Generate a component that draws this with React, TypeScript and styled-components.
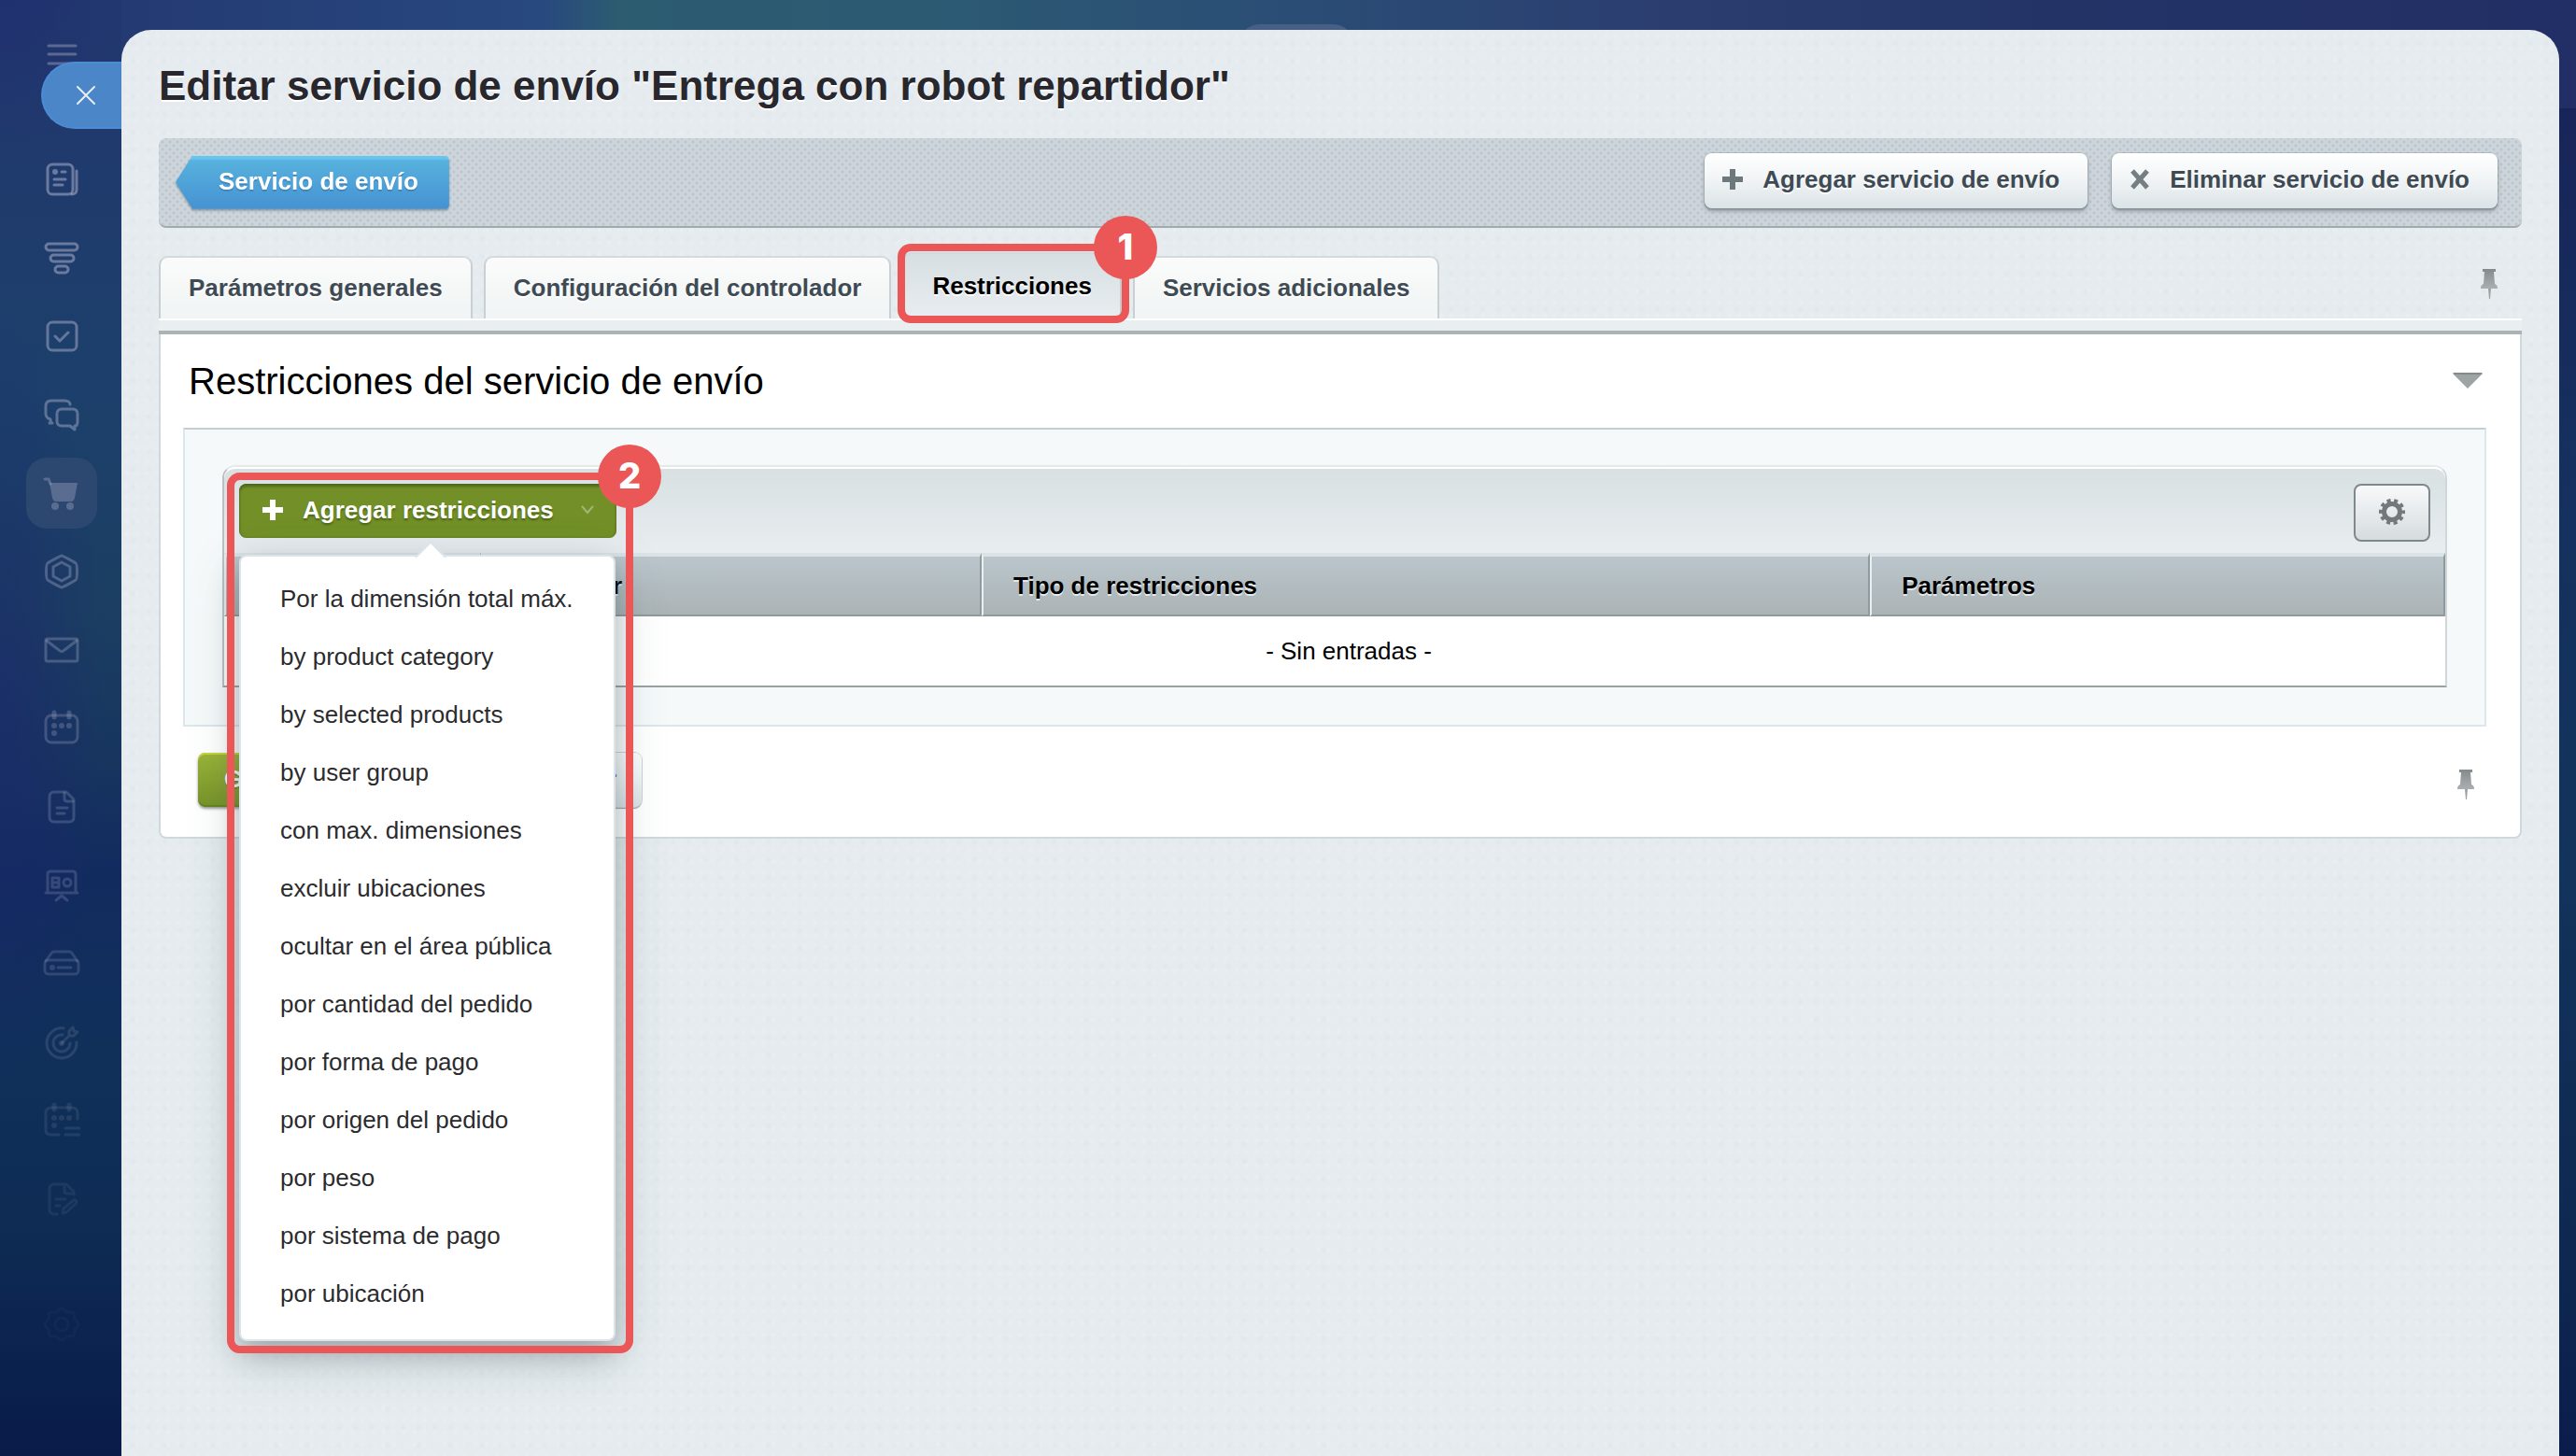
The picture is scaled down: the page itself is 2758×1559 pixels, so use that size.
import React from "react";
import styled, { createGlobalStyle, css } from "styled-components";

const red = "#eb5757";

const GlobalStyle = createGlobalStyle`
  *, *::before, *::after { box-sizing: border-box; }
  body {
    margin: 0;
    font-family: "Liberation Sans", Arial, Helvetica, sans-serif;
    font-size: 26px;
    line-height: 32px;
    color: #000;
    background: #0c2450;
  }
  button { font: inherit; color: inherit; cursor: pointer; margin: 0; }
  ul { list-style: none; margin: 0; padding: 0; }
  h1, h2 { margin: 0; }
`;

const Page = styled.div`
  position: relative;
  display: flex;
  min-height: 100vh;
  background:
    linear-gradient(90deg, #243a72 5%, #284880 21%, #2c5c70 24%, #2c5a73 36%, #2a4c75 51%, #2b3d6f 65%, #233366 80%, #222f66 100%) 0 0 / 100% 116px no-repeat,
    linear-gradient(180deg, #182459 7%, #15305f 32%, #12335b 60%, #0d2650 90%, #0a1c4c 100%);
`;

const TopPill = styled.div`
  position: absolute;
  top: 26px;
  left: 1328px;
  width: 120px;
  height: 40px;
  border-radius: 20px;
  background: #475f85;
`;

const Sidebar = styled.aside`
  position: relative;
  flex: none;
  width: 130px;
  padding: 38px 0 0 2px;
  display: flex;
  flex-direction: column;
  align-items: center;
  background:
    radial-gradient(ellipse 110px 420px at 0 48%, rgba(28, 36, 112, 0.5), rgba(28, 36, 112, 0)),
    radial-gradient(ellipse 130px 160px at 0 0, rgba(30, 42, 112, 0.5), rgba(30, 42, 112, 0)),
    linear-gradient(180deg, #22376f 0, #1f3b6c 14%, #1c406b 27%, #1b3e62 42%, #17355f 52%, #122b5f 60%, #10305a 72%, #0e2c54 84%, #0a1f4c 96%, #091b49 100%);
`;

const MenuButton = styled.button`
  display: flex;
  align-items: center;
  justify-content: center;
  width: 76px;
  height: 40px;
  margin-bottom: 76px;
  border: 0;
  padding: 0;
  background: none;
  color: #5a6990;
`;

const NavList = styled.ul`
  display: flex;
  flex-direction: column;
  gap: 8px;
`;

const NavItem = styled.li<{ $spaced?: boolean }>`
  margin-top: ${(p) => (p.$spaced ? 50 : 0)}px;
`;

const NavLink = styled.a<{ $active?: boolean; $fade: number }>`
  display: flex;
  align-items: center;
  justify-content: center;
  width: 76px;
  height: 76px;
  border-radius: 22px;
  background: ${(p) => (p.$active ? "#2d4870" : "none")};
  color: rgba(172, 176, 202, ${(p) => p.$fade});
`;

const CloseTab = styled.button`
  position: absolute;
  top: 66px;
  right: 0;
  width: 86px;
  height: 72px;
  padding: 0 0 0 8px;
  display: flex;
  align-items: center;
  justify-content: center;
  border: 2px solid #4a8dd6;
  border-right: 0;
  border-radius: 36px 0 0 36px;
  background: #4b86c8;
  color: #e8eef5;
`;

const Panel = styled.main`
  position: relative;
  flex: 1;
  min-width: 0;
  margin: 32px 18px 0 0;
  padding: 32px 40px 60px;
  border-radius: 32px 32px 0 0;
  background:
    radial-gradient(circle, rgba(255, 255, 255, 0.14) 1px, transparent 4px) 0 0 / 11px 13px,
    radial-gradient(circle, rgba(200, 212, 216, 0.12) 1px, transparent 4px) 4px 5px / 17px 19px,
    #e5ebee;
`;

const PageTitle = styled.h1`
  font-size: 44px;
  line-height: 56px;
  font-weight: 700;
  color: #27272d;
  text-shadow: 0 2px 0 #fff;
  white-space: nowrap;
`;

const Toolbar = styled.div`
  display: flex;
  align-items: center;
  justify-content: space-between;
  height: 96px;
  margin-top: 28px;
  padding: 0 26px 0 18px;
  border-bottom: 2px solid #a0aaaf;
  border-radius: 8px;
  background:
    radial-gradient(circle, #bbc6cd 1px, transparent 2px) 0 0 / 8px 8px,
    radial-gradient(circle, #bbc6cd 1px, transparent 2px) 4px 4px / 8px 8px,
    #cdd5da;
`;

const BackShadow = styled.div`
  filter: drop-shadow(0 2px 1px rgba(60, 90, 110, 0.5));
`;

const BackLink = styled.a`
  display: block;
  height: 57px;
  padding: 0 33px 0 46px;
  line-height: 54px;
  font-weight: 700;
  color: #fff;
  text-decoration: none;
  text-shadow: 0 2px 0 rgba(40, 100, 150, 0.4);
  border-radius: 0 5px 5px 0;
  background: linear-gradient(180deg, #66c5ee 0, #66c5ee 3px, #57b1dd 5px, #4592d3 100%);
  clip-path: polygon(18px 0, 100% 0, 100% 100%, 18px 100%, 0 50%);
`;

const ButtonGroup = styled.div`
  display: flex;
  gap: 26px;
  padding-bottom: 4px;
`;

const raised = css`
  border: 0;
  border-radius: 8px;
  font-weight: 700;
  color: #3f4b54;
  text-shadow: 0 2px 0 #fff;
  background: linear-gradient(180deg, #fff 0, #f2f5f6 45%, #dbe3e7 100%);
`;

const ToolButton = styled.button`
  ${raised}
  display: flex;
  align-items: center;
  gap: 20px;
  height: 59px;
  padding: 0 30px 2px 18px;
  box-shadow: 0 0 0 1px rgba(120, 135, 142, 0.25), 0 2px 1px #8d989d, 0 3px 4px rgba(90, 100, 105, 0.5);
`;

const TabRow = styled.div`
  display: flex;
  align-items: flex-end;
  height: 97px;
`;

const TabItem = styled.div`
  position: relative;
  margin-right: 12px;
`;

const Tab = styled.button<{ $active?: boolean }>`
  display: block;
  height: ${(p) => (p.$active ? 71 : 67)}px;
  padding: 0 30px 2px;
  border: 2px solid ${(p) => (p.$active ? "#c3cccf" : "#c8d0d3")};
  border-top-color: #d3dadd;
  border-bottom: 0;
  border-radius: 10px 10px 0 0;
  font-weight: 700;
  color: ${(p) => (p.$active ? "#000" : "#3f4b54")};
  text-shadow: 0 2px 0 #fff;
  white-space: nowrap;
  background: ${(p) =>
    p.$active ? "linear-gradient(180deg, #d7dfe2, #e8edf0)" : "linear-gradient(180deg, #fbfbfb, #f0f4f4)"};
`;

const IconButton = styled.button`
  display: flex;
  padding: 0;
  border: 0;
  background: none;
`;

const TabPin = styled(IconButton)`
  margin: 0 25px 20px auto;
`;

const Shelf = styled.div`
  height: 17px;
  border-top: 2px solid #fff;
  border-bottom: 4px solid #abb3b5;
  background: #e9eff1;
`;

const Content = styled.section`
  border: 2px solid #cfd8da;
  border-top: 0;
  border-radius: 0 0 8px 8px;
  background: #fff;
`;

const SectionHeader = styled.div`
  display: flex;
  align-items: center;
  justify-content: space-between;
  height: 100px;
  padding: 0 40px 0 30px;
`;

const SectionTitle = styled.h2`
  font-size: 40px;
  line-height: 48px;
  font-weight: 400;
`;

const Inset = styled.div`
  margin: 0 36px 0 24px;
  padding: 38px 40px 40px;
  border: 2px solid #dce6eb;
  border-top-color: #c3cdd2;
  background: #f5f9fa;
`;

const Grid = styled.div`
  border: 2px solid;
  border-color: #e6e9ea #cfd7d9 #9aa1a3 #b9c1c3;
  border-radius: 14px 14px 0 0;
  background: #fff;
`;

const GridToolbar = styled.div`
  display: flex;
  align-items: flex-start;
  justify-content: space-between;
  height: 92px;
  padding: 16px 16px 0;
  border-top: 2px solid #fff;
  border-radius: 12px 12px 0 0;
  background: linear-gradient(180deg, #d8e0e2, #e8edf0);
`;

const DropWrap = styled.div`
  position: relative;
  z-index: 5;
`;

const DropButton = styled.button`
  display: flex;
  align-items: center;
  width: 404px;
  height: 58px;
  padding: 0 24px 2px;
  border: 0;
  border-radius: 8px;
  font-weight: 700;
  color: #fff;
  text-shadow: 0 2px 2px rgba(50, 70, 10, 0.6);
  background: #729027;
  box-shadow: inset 0 3px 3px #4f671c, inset 0 0 3px #5b7520;

  span {
    flex: 1;
    padding-left: 20px;
    text-align: left;
  }
`;

const Menu = styled.div`
  position: absolute;
  top: 76px;
  left: 0;
  width: 403px;
  padding: 14px 0 18px;
  border: 2px solid #dbe4e7;
  border-radius: 8px;
  background: #fff;
  box-shadow: 0 14px 28px rgba(70, 90, 96, 0.32), 0 16px 56px rgba(60, 80, 86, 0.22);

  &::before {
    content: "";
    position: absolute;
    top: -12px;
    left: 191px;
    width: 24px;
    height: 24px;
    border: 2px solid #dbe4e7;
    border-right: 0;
    border-bottom: 0;
    background: linear-gradient(135deg, #fff 50%, transparent 50%);
    transform: rotate(45deg);
  }
`;

const MenuItem = styled.button`
  display: block;
  width: 100%;
  height: 62px;
  padding: 0 0 0 42px;
  border: 0;
  text-align: left;
  white-space: nowrap;
  color: #2b2b2e;
  background: none;
`;

const Callout = styled.div<{ $inset: string }>`
  position: absolute;
  inset: ${(p) => p.$inset};
  z-index: 6;
  border: 8px solid ${red};
  border-radius: 14px;
  pointer-events: none;
`;

const Badge = styled.span`
  position: absolute;
  top: -38px;
  right: -38px;
  width: 68px;
  height: 68px;
  border-radius: 50%;
  background: ${red};
  color: #fff;
  font: 800 38px/66px Inter, "Noto Sans", sans-serif;
  text-align: center;
`;

const SettingsButton = styled.button`
  display: flex;
  align-items: center;
  justify-content: center;
  width: 82px;
  height: 62px;
  padding: 0 0 2px;
  border: 2px solid #7f898d;
  border-radius: 8px;
  background: linear-gradient(180deg, #f8f9fa, #e3e7ea 60%, #d5dcdd);
`;

const Table = styled.table`
  width: 100%;
  table-layout: fixed;
  border-collapse: separate;
  border-spacing: 0;
`;

const Col = styled.col<{ $width?: string }>`
  width: ${(p) => p.$width ?? "auto"};
`;

const Th = styled.th`
  height: 68px;
  padding: 0 0 0 32px;
  text-align: left;
  border: 2px solid;
  border-top-width: 4px;
  border-color: #dbe3e7 #8f9b9e #909a9c #e9eef0;
  text-shadow: 0 2px 0 #e3e8ea;
  background: linear-gradient(180deg, #bac6cc, #abb3b5);
`;

const EmptyCell = styled.td`
  height: 74px;
  padding: 0 0 0 30px;
  text-align: center;
`;

const Footer = styled.div`
  display: flex;
  align-items: flex-start;
  justify-content: space-between;
  height: 118px;
  padding: 28px 48px 0 40px;
`;

const FormButtons = styled.div`
  display: flex;
  gap: 6px;
`;

const FormButton = styled.button<{ $primary?: boolean }>`
  ${raised}
  height: 58px;
  padding: 0 27px 2px;
  box-shadow: 0 0 0 1px #cdd4d6, 0 2px 1px #9aa2a5;
  ${(p) =>
    p.$primary &&
    css`
      padding: 0 28px 2px;
      color: #fff;
      text-shadow: 0 2px 0 rgba(80, 110, 20, 0.5);
      background: linear-gradient(180deg, #9ab438, #769229);
      box-shadow: inset 0 2px 0 #c3d43c, inset 0 -2px 0 #67851f, 0 2px 3px rgba(80, 90, 80, 0.6);
    `}
`;

const FooterPin = styled(IconButton)`
  margin-top: 17px;
`;

const Svg = ({ size = 40, children }: { size?: number; children: React.ReactNode }) => (
  <svg
    width={size}
    height={size}
    viewBox={`0 0 ${size} ${size}`}
    fill="none"
    stroke="currentColor"
    strokeWidth="3"
    strokeLinecap="round"
    strokeLinejoin="round"
    aria-hidden="true"
  >
    {children}
  </svg>
);

const Pin = () => (
  <svg width="20" height="34" viewBox="0 0 20 34" aria-hidden="true">
    <defs>
      <linearGradient id="pin" x1="0" y1="0" x2="0" y2="1">
        <stop offset="0" stopColor="#85898b" />
        <stop offset="1" stopColor="#aab0b1" />
      </linearGradient>
    </defs>
    <path d="M3 1h14v3h-2l1 13c2 1 3 2 3 5H1c0-3 1-4 3-5L5 4H3z" fill="url(#pin)" />
    <path d="M9 22h3l-1 11h-1z" fill="#9da1a2" />
  </svg>
);

const Plus = ({ color }: { color: string }) => (
  <svg width="24" height="24" viewBox="0 0 24 24" aria-hidden="true">
    <path d="M9 1h6v8h8v6h-8v8H9v-8H1V9h8z" fill={color} />
  </svg>
);

const calendarTop = (
  <>
    <path d="M12 3v5M28 3v5" strokeWidth="5" />
    <g fill="currentColor" stroke="none">
      <circle cx="12" cy="17" r="3" />
      <circle cx="20" cy="17" r="3" />
      <circle cx="28" cy="17" r="3" />
      <circle cx="12" cy="25" r="3" />
    </g>
  </>
);

const gearPath =
  "M20 3c3 0 3 3 6 4s5-1 7 1 0 4 1 6 4 3 4 6-3 3-4 6 1 4-1 6-4 0-7 1-3 4-6 4-3-3-6-4-5 1-7-1 0-4-1-6-4-3-4-6 3-4 4-6-1-4 1-6 4 0 7-1 3-4 6-4z";

const navItems = [
  {
    label: "Noticias",
    fade: 0.54,
    icon: (
      <>
        <rect x="5" y="4" width="27" height="32" rx="5" />
        <path d="M36 11v20c0 3-2 5-5 5" />
        <circle cx="13" cy="12" r="3" fill="currentColor" stroke="none" />
        <path d="M20 12h4M12 20h12M12 26h9" />
      </>
    ),
  },
  {
    label: "CRM",
    fade: 0.54,
    icon: (
      <>
        <rect x="3" y="5" width="34" height="7" rx="3.5" />
        <rect x="8" y="17" width="25" height="7" rx="3.5" />
        <rect x="13" y="29" width="14" height="7" rx="3.5" />
      </>
    ),
  },
  {
    label: "Tareas",
    fade: 0.5,
    icon: (
      <>
        <rect x="5" y="5" width="31" height="30" rx="5" />
        <path d="m13 20 5 5 9-9" />
      </>
    ),
  },
  {
    label: "Chat",
    fade: 0.46,
    icon: (
      <>
        <path d="M9 29c-1-2-1-3-1-4-3-1-5-3-5-6v-8c0-4 2-6 6-6h14c4 0 6 2 6 4M8 25c0 3 0 4-1 4h3" />
        <path d="M20 14h12c3 0 5 2 5 5v9c0 2-1 4-3 4v4l-5-4h-9c-3 0-5-2-5-5v-8c0-3 2-5 5-5z" />
      </>
    ),
  },
  {
    label: "Tienda",
    fade: 0.36,
    active: true,
    icon: (
      <>
        <path d="M2 5h4l2 5" />
        <path d="M7 9h30l-3 16c-1 3-2 4-4 4H14c-2 0-3-1-4-4z" fill="currentColor" stroke="none" />
        <circle cx="13" cy="34" r="4" fill="currentColor" stroke="none" />
        <circle cx="29" cy="34" r="4" fill="currentColor" stroke="none" />
      </>
    ),
  },
  {
    label: "Sitios",
    fade: 0.36,
    icon: (
      <>
        <path d="M20 3c1 0 14 7 15 8 2 1 2 17 0 18-1 1-14 8-15 8S6 30 5 29c-2-1-2-17 0-18C6 10 19 3 20 3z" />
        <path d="M20 10l9 5v10l-9 5-9-5V15z" />
      </>
    ),
  },
  {
    label: "Correo",
    fade: 0.32,
    icon: (
      <>
        <rect x="3" y="8" width="34" height="24" rx="2" />
        <path d="m4 10 13 10c2 2 4 2 6 0L36 10" />
      </>
    ),
  },
  {
    label: "Calendario",
    fade: 0.28,
    icon: (
      <>
        <rect x="3" y="6" width="34" height="29" rx="6" />
        {calendarTop}
      </>
    ),
  },
  {
    label: "Documentos",
    fade: 0.25,
    icon: (
      <>
        <path d="M12 4h13l8 8v19c0 3-2 5-5 5H12c-3 0-5-2-5-5V9c0-3 2-5 5-5z" />
        <path d="M23 5v6c0 2 1 3 3 3h6M15 21h11M15 27h8" />
      </>
    ),
  },
  {
    label: "Pizarras",
    fade: 0.23,
    icon: (
      <>
        <path d="M5 27V8c0-2 1-3 3-3h24c2 0 3 1 3 3v19M3 28h34M14 36l6-5 6 5" />
        <path d="M10 12h7v10h-7zM10 17h7" />
        <circle cx="26" cy="17" r="4" />
      </>
    ),
  },
  {
    label: "Drive",
    fade: 0.21,
    icon: (
      <>
        <path d="M3 17l5-7c1-2 2-3 4-3h16c2 0 3 1 4 3l5 7" />
        <rect x="2" y="16" width="36" height="15" rx="4" />
        <circle cx="10" cy="24" r="3" fill="currentColor" stroke="none" />
        <path d="M16 24h14" />
      </>
    ),
  },
  {
    label: "Objetivos",
    fade: 0.17,
    icon: (
      <>
        <path d="M22 5a16 16 0 1 0 14 15M21 12a9 9 0 1 0 8 9M20 21l8-8M28 13V8l4-4 1 4 4 1-4 4z" />
        <circle cx="20" cy="21" r="3" fill="currentColor" stroke="none" />
      </>
    ),
  },
  {
    label: "Reservas",
    fade: 0.13,
    icon: (
      <>
        <path d="M17 35H9c-4 0-6-2-6-5V12c0-4 2-6 6-6h22c4 0 6 2 6 6v6M24 28h15M24 35h15" />
        {calendarTop}
      </>
    ),
  },
  {
    label: "Firma",
    fade: 0.1,
    icon: (
      <>
        <path d="M15 36h-3c-3 0-5-2-5-5V9c0-3 2-5 5-5h13l8 8v3M23 5v6c0 2 1 3 3 3h6M14 20h10M14 27h4" />
        <path d="m21 35 1-5 11-9c2-1 4 1 2 4l-10 9z" />
      </>
    ),
  },
  {
    label: "Ajustes",
    fade: 0.04,
    spaced: true,
    icon: (
      <>
        <path d={gearPath} />
        <circle cx="20" cy="20" r="7" />
      </>
    ),
  },
];

const restrictions = [
  "Por la dimensión total máx.",
  "by product category",
  "by selected products",
  "by user group",
  "con max. dimensiones",
  "excluir ubicaciones",
  "ocultar en el área pública",
  "por cantidad del pedido",
  "por forma de pago",
  "por origen del pedido",
  "por peso",
  "por sistema de pago",
  "por ubicación",
];

const tabs = ["Parámetros generales", "Configuración del controlador", "Restricciones", "Servicios adicionales"];

export default function App() {
  return (
    <Page>
      <GlobalStyle />
      <TopPill />
      <Sidebar>
        <MenuButton aria-label="Menú">
          <Svg>
            <path d="M6 11h29M6 20h29M6 30h29" />
          </Svg>
        </MenuButton>
        <NavList>
          {navItems.map((item) => (
            <NavItem key={item.label} $spaced={item.spaced}>
              <NavLink href="#" aria-label={item.label} $active={item.active} $fade={item.fade}>
                <Svg>{item.icon}</Svg>
              </NavLink>
            </NavItem>
          ))}
        </NavList>
        <CloseTab aria-label="Cerrar">
          <Svg size={22}>
            <path d="M2 2l18 18M20 2 2 20" strokeWidth="2" />
          </Svg>
        </CloseTab>
      </Sidebar>

      <Panel>
        <PageTitle>Editar servicio de envío "Entrega con robot repartidor"</PageTitle>

        <Toolbar>
          <BackShadow>
            <BackLink href="#">Servicio de envío</BackLink>
          </BackShadow>
          <ButtonGroup>
            <ToolButton>
              <Plus color="#6d787d" />
              Agregar servicio de envío
            </ToolButton>
            <ToolButton>
              <svg width="24" height="24" viewBox="0 0 24 24" aria-hidden="true">
                <path d="M4 3l16 18M20 3 4 21" stroke="#757e82" strokeWidth="5" />
              </svg>
              Eliminar servicio de envío
            </ToolButton>
          </ButtonGroup>
        </Toolbar>

        <TabRow>
          {tabs.map((label) => {
            const active = label === "Restricciones";
            return (
              <TabItem key={label}>
                <Tab $active={active}>{label}</Tab>
                {active && (
                  <Callout $inset="-9px -8px -5px -5px">
                    <Badge>1</Badge>
                  </Callout>
                )}
              </TabItem>
            );
          })}
          <TabPin aria-label="Fijar pestañas">
            <Pin />
          </TabPin>
        </TabRow>
        <Shelf />

        <Content>
          <SectionHeader>
            <SectionTitle>Restricciones del servicio de envío</SectionTitle>
            <IconButton aria-label="Contraer">
              <svg width="32" height="18" viewBox="0 0 32 18" aria-hidden="true">
                <path d="M0 1h32L16 17z" fill="#9ea3a4" />
                <path d="M0 0h32l-2 2H2z" fill="#84898b" />
              </svg>
            </IconButton>
          </SectionHeader>

          <Inset>
            <Grid>
              <GridToolbar>
                <DropWrap>
                  <DropButton aria-expanded="true">
                    <Plus color="#fff" />
                    <span>Agregar restricciones</span>
                    <svg width="14" height="10" viewBox="0 0 14 10" aria-hidden="true">
                      <path d="M1 1l6 7 6-7" fill="none" stroke="#a2b578" strokeWidth="2" />
                    </svg>
                  </DropButton>
                  <Menu>
                    {restrictions.map((name) => (
                      <MenuItem key={name}>{name}</MenuItem>
                    ))}
                    <Callout $inset="-90px -21px -15px -15px">
                      <Badge>2</Badge>
                    </Callout>
                  </Menu>
                </DropWrap>
                <SettingsButton aria-label="Configurar tabla">
                  <svg width="28" height="28" viewBox="0 0 28 28" aria-hidden="true">
                    <circle cx="14" cy="14" r="8.5" fill="none" stroke="#73787a" strokeWidth="5" />
                    <circle
                      cx="14"
                      cy="14"
                      r="12"
                      fill="none"
                      stroke="#73787a"
                      strokeWidth="4"
                      strokeDasharray="4 3.54"
                      strokeDashoffset="2"
                    />
                  </svg>
                </SettingsButton>
              </GridToolbar>
              <Table>
                <colgroup>
                  <Col $width="275px" />
                  <Col $width="536px" />
                  <Col $width="40%" />
                  <Col />
                </colgroup>
                <thead>
                  <tr>
                    <Th aria-label="Acciones" />
                    <Th>Clasificar</Th>
                    <Th>Tipo de restricciones</Th>
                    <Th>Parámetros</Th>
                  </tr>
                </thead>
                <tbody>
                  <tr>
                    <EmptyCell colSpan={4}>- Sin entradas -</EmptyCell>
                  </tr>
                </tbody>
              </Table>
            </Grid>
          </Inset>

          <Footer>
            <FormButtons>
              <FormButton $primary>Guardar</FormButton>
              <FormButton>Aplicar</FormButton>
              <FormButton>Cancelar</FormButton>
            </FormButtons>
            <FooterPin aria-label="Fijar botones">
              <Pin />
            </FooterPin>
          </Footer>
        </Content>
      </Panel>
    </Page>
  );
}
